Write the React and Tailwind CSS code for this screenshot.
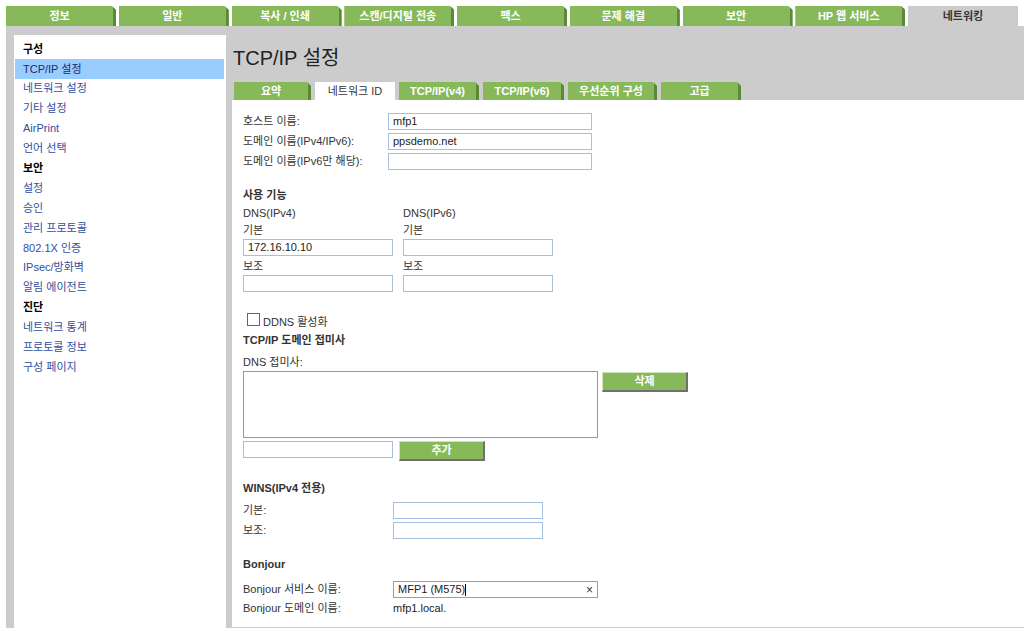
import { useState } from "react";

const topTabs = ["정보", "일반", "복사 / 인쇄", "스캔/디지털 전송", "팩스", "문제 해결", "보안", "HP 웹 서비스", "네트워킹"];

const subTabs = [
    { label: "요약", w: "w-[77px]" },
    { label: "네트워크 ID", w: "w-[80px]" },
    { label: "TCP/IP(v4)", w: "w-[80px]" },
    { label: "TCP/IP(v6)", w: "w-[81px]" },
    { label: "우선순위 구성", w: "w-[89px]" },
    { label: "고급", w: "w-[80px]" },
];

const menu = [
    { label: "구성", head: true },
    { label: "TCP/IP 설정" },
    { label: "네트워크 설정" },
    { label: "기타 설정" },
    { label: "AirPrint" },
    { label: "언어 선택" },
    { label: "보안", head: true },
    { label: "설정" },
    { label: "승인" },
    { label: "관리 프로토콜" },
    { label: "802.1X 인증" },
    { label: "IPsec/방화벽" },
    { label: "알림 에이전트" },
    { label: "진단", head: true },
    { label: "네트워크 통계" },
    { label: "프로토콜 정보" },
    { label: "구성 페이지" },
];

const Field = ({ value = "", className = "" }) => (
    <div className={`h-[17px] border border-[#a6bfdc] bg-white px-[4px] text-[11px] leading-[15px] text-[#222] ${className}`}>
        {value}
    </div>
);

const GreenButton = ({ children, className = "" }) => (
    <div className={`h-[20px] w-[86px] bg-[#87b95b] border-t border-l border-t-[#cfe3bd] border-l-[#cfe3bd] border-r-2 border-b-2 border-r-[#707070] border-b-[#707070] flex items-center justify-center text-[11px] font-bold text-white ${className}`}>
        {children}
    </div>
);

const App = () => {
    const [selected, setSelected] = useState("TCP/IP 설정");

    return (
        <div className="w-[1024px] h-[628px] overflow-hidden bg-white font-['Liberation_Sans','Noto_Sans_CJK_KR',sans-serif] text-[11px]">
            {/* top tabs */}
            <div className="flex gap-[2.75px] pl-[6px] pt-[6px] h-[26px]">
                {topTabs.map((t) => {
                    const active = t === "네트워킹";
                    return (
                        <div
                            key={t}
                            className={`w-[110px] shrink-0 h-[20px] flex items-center justify-center font-bold text-[11px] ${active
                                ? "bg-[#cccccc] text-[#333]"
                                : "bg-[#87b95b] text-white border-r-[3px] border-r-[#5b8a37] [clip-path:polygon(0_0,calc(100%-4px)_0,100%_4px,100%_100%,0_100%)]"}`}
                        >
                            {t}
                        </div>
                    );
                })}
            </div>

            <div className="flex h-[602px] bg-[#cccccc] ml-[6px] pl-[8px]">
                {/* sidebar */}
                <div className="w-[212px] mt-[9px] bg-white pt-[4px]">
                    {menu.map((m) =>
                        m.head ? (
                            <div key={m.label} className="h-[19.9px] flex items-center pl-[9px] font-bold text-black">
                                {m.label}
                            </div>
                        ) : (
                            <div
                                key={m.label}
                                onClick={() => setSelected(m.label)}
                                className={`h-[19.9px] ml-[1px] mr-[2px] flex items-center pl-[8px] cursor-pointer ${selected === m.label ? "bg-[#99ccff] text-[#1a2a6a]" : "text-[#2f4fa0]"}`}
                            >
                                {m.label}
                            </div>
                        )
                    )}
                </div>

                {/* main */}
                <div className="flex-1 ml-[6px] flex flex-col">
                    <div className="h-[56px] pt-[19px] pl-[1px] text-[20px] leading-[26px] text-[#222]">TCP/IP 설정</div>
                    <div className="flex gap-[4px] pl-[2px] h-[18px]">
                        {subTabs.map((s) => {
                            const active = s.label === "네트워크 ID";
                            return (
                                <div
                                    key={s.label}
                                    className={`${s.w} h-[18px] flex items-center justify-center font-bold text-[11px] ${active
                                        ? "bg-white text-[#333] font-normal"
                                        : "bg-[#87b95b] text-white border-r-[3px] border-r-[#5b8a37] [clip-path:polygon(0_0,calc(100%-4px)_0,100%_4px,100%_100%,0_100%)]"}`}
                                >
                                    {s.label}
                                </div>
                            );
                        })}
                    </div>

                    <div className="flex-1 mb-[1px] bg-white pl-[11px] pt-[13px] text-[#333]">
                        <div className="flex flex-col gap-[3px]">
                            <div className="flex items-center">
                                <div className="w-[145px]">호스트 이름:</div>
                                <Field value="mfp1" className="w-[204px]" />
                            </div>
                            <div className="flex items-center">
                                <div className="w-[145px]">도메인 이름(IPv4/IPv6):</div>
                                <Field value="ppsdemo.net" className="w-[204px]" />
                            </div>
                            <div className="flex items-center">
                                <div className="w-[145px]">도메인 이름(IPv6만 해당):</div>
                                <Field className="w-[204px]" />
                            </div>
                        </div>

                        <div className="mt-[16px] h-[18px] leading-[18px] font-bold">사용 기능</div>
                        <div className="flex gap-[10px]">
                            <div className="w-[150px] flex flex-col">
                                <div className="h-[18px] leading-[18px]">DNS(IPv4)</div>
                                <div className="h-[17px] leading-[17px]">기본</div>
                                <Field value="172.16.10.10" />
                                <div className="h-[19px] leading-[21px]">보조</div>
                                <Field />
                            </div>
                            <div className="w-[150px] flex flex-col">
                                <div className="h-[18px] leading-[18px]">DNS(IPv6)</div>
                                <div className="h-[17px] leading-[17px]">기본</div>
                                <Field />
                                <div className="h-[19px] leading-[21px]">보조</div>
                                <Field />
                            </div>
                        </div>

                        <div className="mt-[21px] flex items-start h-[16px] pl-[4px]">
                            <div className="w-[13px] h-[13px] border border-[#666] bg-white" />
                            <div className="ml-[3px] mt-[3px] leading-[13px]">DDNS 활성화</div>
                        </div>
                        <div className="mt-[2px] h-[18px] leading-[18px] font-bold">TCP/IP 도메인 접미사</div>
                        <div className="mt-[4px] h-[18px] leading-[18px]">DNS 접미사:</div>
                        <div className="flex items-start">
                            <div className="w-[355px] h-[67px] border border-[#999] bg-white" />
                            <GreenButton className="ml-[4px] mt-[1px]">삭제</GreenButton>
                        </div>
                        <div className="mt-[3px] flex items-start">
                            <Field className="w-[150px] h-[16px]" />
                            <GreenButton className="ml-[6px]">추가</GreenButton>
                        </div>

                        <div className="mt-[18px] h-[18px] leading-[18px] font-bold">WINS(IPv4 전용)</div>
                        <div className="mt-[5px] flex flex-col gap-[3px]">
                            <div className="flex items-center">
                                <div className="w-[150px]">기본:</div>
                                <Field className="w-[150px]" />
                            </div>
                            <div className="flex items-center">
                                <div className="w-[150px]">보조:</div>
                                <Field className="w-[150px]" />
                            </div>
                        </div>

                        <div className="mt-[16px] h-[18px] leading-[18px] font-bold">Bonjour</div>
                        <div className="mt-[8px] flex items-center">
                            <div className="w-[150px]">Bonjour 서비스 이름:</div>
                            <div className="w-[205px] h-[17px] border border-[#7fa3cf] bg-white pl-[4px] pr-[4px] flex items-center text-[#222]">
                                <span>MFP1 (M575)</span>
                                <span className="w-px h-[12px] bg-black" />
                                <span className="ml-auto text-[12px] leading-none text-[#333]">×</span>
                            </div>
                        </div>
                        <div className="mt-[1px] flex items-center h-[18px]">
                            <div className="w-[150px]">Bonjour 도메인 이름:</div>
                            <div className="text-[#222]">mfp1.local.</div>
                        </div>
                    </div>
                </div>
            </div>
        </div>
    );
};

export default App;
